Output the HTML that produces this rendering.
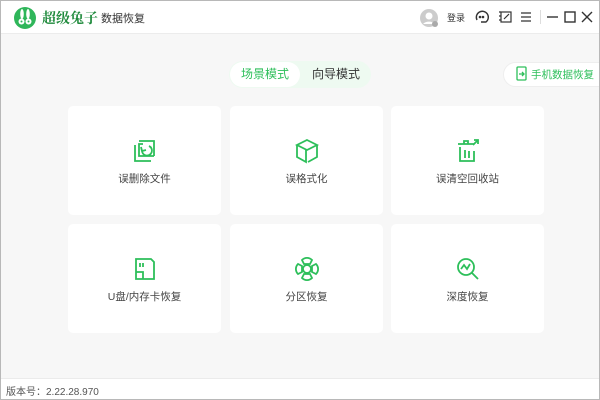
<!DOCTYPE html><html><head><meta charset="utf-8"><style>
*{margin:0;padding:0;box-sizing:border-box}
body{width:600px;height:400px;overflow:hidden;background:#f7f7f7;font-family:"Liberation Sans","Noto Sans CJK SC",sans-serif;position:relative}
.frame{position:absolute;left:0;top:0;width:600px;height:400px;border:1px solid #b8b8b8;pointer-events:none}
.top{position:absolute;left:0;top:0;width:600px;height:34px;background:#fff;border-bottom:1px solid #ececec}
.abs{position:absolute}
.card{position:absolute;width:153px;height:109px;background:#fff;border-radius:5px}
.card svg{position:absolute;left:64px;top:32px}
.card span{position:absolute;left:0;right:0;top:65px;text-align:center;font-size:10.5px;color:#444}
.foot{position:absolute;left:0;bottom:0;width:600px;height:22px;background:#fff;border-top:1px solid #ebebeb;font-size:10px;color:#555;padding:4px 0 0 6px}
</style></head><body>
<div class="top">
 <svg class="abs" style="left:13px;top:6px" width="24" height="24" viewBox="0 0 24 24"><circle cx="12" cy="12" r="11" fill="#2fb65a"/><ellipse cx="9" cy="8" rx="1.8" ry="5" fill="#fff"/><ellipse cx="15" cy="8" rx="1.8" ry="5" fill="#fff"/><circle cx="8.5" cy="15.5" r="3" fill="#fff"/><circle cx="15.5" cy="15.5" r="3" fill="#fff"/><circle cx="8.5" cy="15.5" r="1" fill="#2fb65a"/><circle cx="15.5" cy="15.5" r="1" fill="#2fb65a"/></svg>
 <div class="abs" style="left:42px;top:8px;font-size:14px;font-weight:bold;color:#1f8a3c;font-family:'Noto Serif CJK SC',serif">超级兔子</div>
 <div class="abs" style="left:101px;top:10px;font-size:11px;color:#333">数据恢复</div>
 <svg class="abs" style="left:419px;top:8px" width="20" height="20" viewBox="0 0 20 20"><circle cx="10" cy="10" r="9" fill="#ccc"/><circle cx="10" cy="8" r="3.5" fill="#fff"/><path d="M4 16a7 5 0 0 1 12 0" fill="#fff"/><circle cx="16" cy="16" r="3" fill="#aaa"/></svg>
 <div class="abs" style="left:447px;top:11px;font-size:9px;color:#333">登录</div>
 <svg class="abs" style="left:474px;top:9px" width="16" height="16" viewBox="0 0 16 16" fill="none" stroke="#333" stroke-width="1.4"><path d="M3 11A6 6 0 1 1 12 13H7"/><circle cx="6" cy="8" r=".6" fill="#333"/><circle cx="9" cy="8" r=".6" fill="#333"/></svg>
 <svg class="abs" style="left:498px;top:9px" width="15" height="15" viewBox="0 0 15 15" fill="none" stroke="#333" stroke-width="1.2"><rect x="3" y="3" width="10" height="10"/><path d="M1 3h2M1 7h2M1 11h2M6 10l5-5"/></svg>
 <svg class="abs" style="left:520px;top:11px" width="12" height="12" viewBox="0 0 12 12" stroke="#333" stroke-width="1.3"><path d="M1 2h10M1 6h10M1 10h10"/></svg>
 <div class="abs" style="left:540px;top:10px;width:1px;height:14px;background:#ddd"></div>
 <svg class="abs" style="left:547px;top:11px" width="46" height="12" viewBox="0 0 46 12" fill="none" stroke="#333" stroke-width="1.4"><path d="M0 6h11"/><rect x="18" y="1" width="10" height="10"/><path d="M35 1l10 10M45 1L35 11"/></svg>
</div>
<div class="abs" style="left:229px;top:61px;width:142px;height:27px;border-radius:14px;background:#eefaf1"></div>
<div class="abs" style="left:230px;top:62px;width:70px;height:25px;border-radius:13px;background:#fff;font-size:12px;color:#2dbf5a;text-align:center;line-height:25px">场景模式</div>
<div class="abs" style="left:302px;top:62px;width:68px;height:25px;font-size:12px;color:#333;text-align:center;line-height:25px">向导模式</div>
<div class="abs" style="left:503px;top:62px;width:100px;height:25px;border-radius:13px 0 0 13px;background:#fff;border:1px solid #eee"></div>
<svg class="abs" style="left:516px;top:66px" width="11" height="15" viewBox="0 0 11 15" fill="none" stroke="#2dbf5a" stroke-width="1.3"><rect x="1" y="1" width="9" height="13" rx="1"/><path d="M3 8h5M6 6l2 2-2 2" /></svg>
<div class="abs" style="left:531px;top:67px;font-size:10.5px;color:#2dbf5a">手机数据恢复</div>

<div class="card" style="left:68px;top:106px"><svg width="26" height="26" viewBox="0 0 26 26" fill="none" stroke="#2dbf5a" stroke-width="1.8"><path d="M7 3h15v15M3 7v16h16"/><path d="M11 6H7v12h15M17 8a5 5 0 1 1-7 4M9 9l1 4 4-1"/></svg><span>误删除文件</span></div>
<div class="card" style="left:230px;top:106px"><svg width="26" height="26" viewBox="0 0 26 26" fill="none" stroke="#2dbf5a" stroke-width="1.8"><path d="M13 2l10 5-10 5L3 7z"/><path d="M3 7v12l9 5V12M23 7v12l-9 5"/></svg><span>误格式化</span></div>
<div class="card" style="left:391px;top:106px"><svg width="26" height="26" viewBox="0 0 26 26" fill="none" stroke="#2dbf5a" stroke-width="1.8"><path d="M3 6h16M9 6V3h4v3M5 9v14h14V13M10 12v8M14 13v7M19 2h4v4M23 2l-5 5"/></svg><span>误清空回收站</span></div>
<div class="card" style="left:68px;top:224px"><svg width="26" height="26" viewBox="0 0 26 26" fill="none" stroke="#2dbf5a" stroke-width="1.8"><path d="M4 3h15l3 3v17H4z"/><path d="M8 7v4M11 7v4M4 16h7v7"/></svg><span>U盘/内存卡恢复</span></div>
<div class="card" style="left:230px;top:224px"><svg width="26" height="26" viewBox="0 0 26 26" fill="none" stroke="#2dbf5a" stroke-width="1.8"><circle cx="13" cy="13" r="4"/><path d="M8 4a7 7 0 0 1 10 0l-2 4h-6zM8 22a7 7 0 0 0 10 0l-2-4h-6zM4 8a7 7 0 0 0 0 10l4-2v-6zM22 8a7 7 0 0 1 0 10l-4-2v-6z"/></svg><span>分区恢复</span></div>
<div class="card" style="left:391px;top:224px"><svg width="26" height="26" viewBox="0 0 26 26" fill="none" stroke="#2dbf5a" stroke-width="1.8"><circle cx="11" cy="11" r="8"/><path d="M17 17l6 6M6 13l3-4 3 4 3-5"/></svg><span>深度恢复</span></div>
<div class="foot">版本号：2.22.28.970</div>
<div class="frame"></div>
</body></html>
